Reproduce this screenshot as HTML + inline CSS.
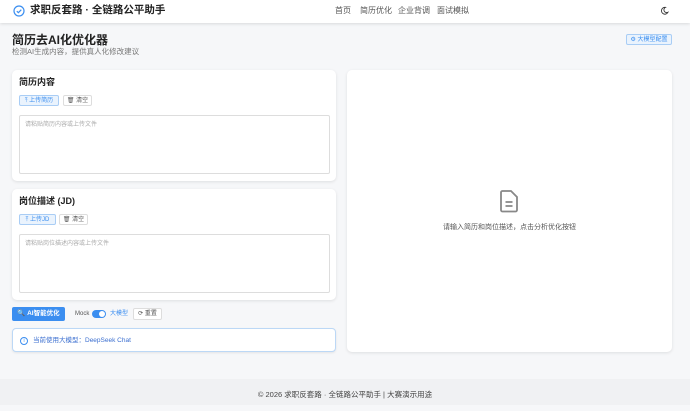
<!DOCTYPE html>
<html><head><meta charset="utf-8"><style>
*{box-sizing:border-box;margin:0;padding:0;line-height:1.15}
body{width:690px;height:405px;overflow:hidden;background:#f6f7f9;font-family:"Liberation Sans","Noto Sans CJK SC",sans-serif;color:#222;position:relative}
.hdr{position:absolute;left:0;top:0;width:690px;height:23px;background:#fff;box-shadow:0 1px 3px rgba(0,0,0,.12)}
.abs{position:absolute}
.nav{font-size:8px;color:#555;top:6px}
.card{position:absolute;background:#fff;border-radius:5px;box-shadow:0 1px 3px rgba(0,0,0,.1)}
.ct{position:absolute;left:7px;font-size:9px;font-weight:bold;color:#222}
.btn{position:absolute;height:11px;border:1px solid #ddd;border-radius:2px;font-size:6px;color:#555;display:flex;align-items:center;justify-content:center;background:#fff;white-space:nowrap;padding-top:1px}
.btn.b{border-color:#a9cdf5;background:#eaf3fd;color:#3b8ef0}
.ta{position:absolute;left:7px;width:311px;height:59px;border:1px solid #ddd;border-radius:2px;font-size:6px;color:#aaa;padding:6px 5px}
</style></head><body>
<div class="hdr">
<svg class="abs" style="left:13px;top:5px" width="12" height="12" viewBox="0 0 12 12"><circle cx="6" cy="6" r="5" fill="none" stroke="#3b8ef0" stroke-width="1.2"/><path d="M3.8 6.2l1.6 1.5 2.9-3" fill="none" stroke="#3b8ef0" stroke-width="1.2"/></svg>
<div class="abs" style="left:30px;top:4px;font-size:10.5px;font-weight:bold;color:#222">求职反套路 · 全链路公平助手</div>
<div class="abs nav" style="left:335px">首页</div>
<div class="abs nav" style="left:360px">简历优化</div>
<div class="abs nav" style="left:398px">企业背调</div>
<div class="abs nav" style="left:437px">面试模拟</div>
<svg class="abs" style="left:660px;top:6px" width="9" height="9" viewBox="0 0 10 10"><path d="M6 1.5A3.8 3.8 0 1 0 8.8 7 3 3 0 0 1 6 1.5z" fill="none" stroke="#333" stroke-width="1"/></svg>
</div>
<div class="abs" style="left:12px;top:34px;font-size:12px;font-weight:bold;color:#222">简历去AI化优化器</div>
<div class="abs" style="left:12px;top:48px;font-size:7.5px;color:#777">检测AI生成内容，提供真人化修改建议</div>
<div class="btn b" style="left:626px;top:34px;width:46px;height:11px">⚙ 大模型配置</div>

<div class="card" style="left:12px;top:70px;width:324px;height:111px">
<div class="ct" style="top:7px">简历内容</div>
<div class="btn b" style="left:7px;top:25px;width:40px">⤒ 上传简历</div>
<div class="btn" style="left:51px;top:25px;width:29px">🗑 清空</div>
<div class="ta" style="top:45px">请粘贴简历内容或上传文件</div>
</div>
<div class="card" style="left:12px;top:189px;width:324px;height:111px">
<div class="ct" style="top:7px">岗位描述 (JD)</div>
<div class="btn b" style="left:7px;top:25px;width:37px">⤒ 上传JD</div>
<div class="btn" style="left:47px;top:25px;width:29px">🗑 清空</div>
<div class="ta" style="top:45px">请粘贴岗位描述内容或上传文件</div>
</div>
<div class="abs" style="left:12px;top:307px;width:53px;height:14px;background:#3b8ef0;border-radius:2px;color:#fff;font-size:6.5px;font-weight:bold;display:flex;align-items:center;justify-content:center">🔍 AI智能优化</div>
<div class="abs" style="left:75px;top:311px;font-size:6px;color:#555">Mock</div>
<div class="abs" style="left:92px;top:310px;width:14px;height:8px;border-radius:4px;background:#3b8ef0"><div class="abs" style="right:1px;top:1px;width:6px;height:6px;border-radius:3px;background:#fff"></div></div>
<div class="abs" style="left:110px;top:311px;font-size:6px;color:#3b8ef0">大模型</div>
<div class="btn" style="left:133px;top:308px;width:29px;height:12px">⟳ 重置</div>
<div class="abs" style="left:12px;top:328px;width:324px;height:24px;background:#fff;border:1px solid #bcd8f6;border-radius:4px;box-shadow:0 1px 2px rgba(0,0,0,.08)">
<div class="abs" style="left:7px;top:8px;width:8px;height:8px;border:1px solid #3b8ef0;border-radius:50%;font-size:5px;color:#3b8ef0;text-align:center;line-height:6px">i</div>
<div class="abs" style="left:20px;top:8px;font-size:6.5px;color:#3b6fd0">当前使用大模型：DeepSeek Chat</div>
</div>
<div class="card" style="left:347px;top:70px;width:325px;height:282px">
<svg class="abs" style="left:152px;top:119px" width="20" height="24" viewBox="0 0 20 24"><path d="M3.5 2h8.5l6 6v13a1.5 1.5 0 0 1-1.5 1.5h-13A1.5 1.5 0 0 1 2 21V3.5A1.5 1.5 0 0 1 3.5 2z" fill="none" stroke="#888" stroke-width="1.8"/><path d="M6.5 13h7M6.5 17h7" stroke="#888" stroke-width="1.8"/></svg>
<div class="abs" style="left:0;width:325px;text-align:center;top:154px;font-size:7px;color:#555">请输入简历和岗位描述，点击分析优化按钮</div>
</div>
<div class="abs" style="left:0;top:379px;width:690px;height:26px;background:#f0f1f3;text-align:center;font-size:7.5px;color:#444;line-height:32px">© 2026 求职反套路 · 全链路公平助手 | 大赛演示用途</div>
</body></html>
